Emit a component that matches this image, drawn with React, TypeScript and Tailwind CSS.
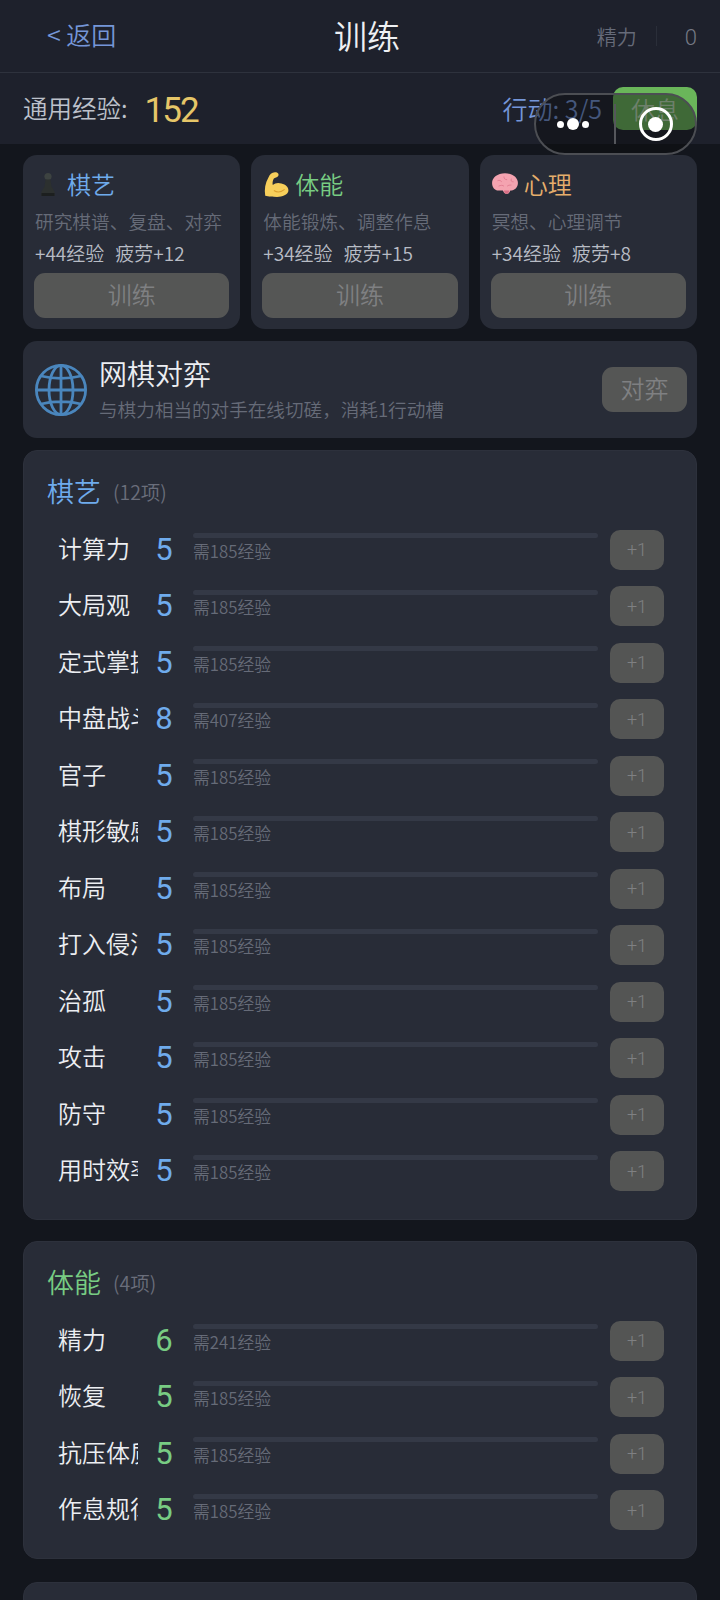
import React from 'react';

const font = { fontFamily: '"Noto Sans CJK SC", sans-serif' };

const PawnIcon = () => (
  <svg width="28" height="28" viewBox="0 0 28 28">
    <circle cx="14" cy="6.5" r="3.6" fill="#3d4341" />
    <path d="M11.5 9.5h5l1 7 3 5v4.500h-13v-4.500l3-5z" fill="#2c302f" />
    <path d="M7.500 23h13v3h-13z" fill="#1c1f1f" />
  </svg>
);

const MuscleIcon = () => (
  <svg width="28" height="28" viewBox="0 0 26 26">
    <path d="M3 24C2 18 3 12 6 7c1-3 3-5 6-5s4 2 3 3.500C14 7 12 7 11 8c-1 2-1.500 4-1 6 2-2 5-2.500 8-1.500 4 1 7 3.500 6.500 7C24 23 19 25 14 25c-4 0-8 0-11-1z" fill="#f7cf5b" />
    <path d="M11 19c3 2 7 1.500 10-1" stroke="#dca02f" strokeWidth="1" fill="none" />
  </svg>
);

const BrainIcon = () => (
  <svg width="28" height="26" viewBox="0 0 26 24">
    <path d="M1 11C1 6 6 2 13 2s12 4 12 9c0 4-3 7-7 7l-1 2c-.7 1.500-4 1.500-5 0l-1-2H7c-3.500 0-6-3-6-7z" fill="#f4a3b0" />
    <path d="M6 9c2-1 3 0 4 1M12 5c0 2 1 3 3 3M19 7c-1 2 0 3 2 3M7 14c2-1 4-1 5 0M15 14c1-1 3-1 4-1" stroke="#e27e93" strokeWidth="0.9" fill="none" />
    <path d="M12 18h5l-.5 2c-.5 1.500-3.500 1.500-4 0z" fill="#d86f86" />
  </svg>
);

const GlobeIcon = () => (
  <svg width="54" height="54" viewBox="0 0 54 54" fill="none" stroke="#4a86bd" strokeWidth="2.8">
    <circle cx="27" cy="27" r="24.6" />
    <ellipse cx="27" cy="27" rx="12" ry="24.6" />
    <path d="M27 2.400v49.200M2.400 27h49.200M7 13c12 3 28 3 40 0M7 41c12-3 28-3 40 0" />
  </svg>
);

const cards = [
  { icon: <PawnIcon />, title: '棋艺', color: 'text-[#6fabec]', desc: '研究棋谱、复盘、对弈', exp: '+44经验', tired: '疲劳+12' },
  { icon: <MuscleIcon />, title: '体能', color: 'text-[#78cc83]', desc: '体能锻炼、调整作息', exp: '+34经验', tired: '疲劳+15' },
  { icon: <BrainIcon />, title: '心理', color: 'text-[#e6ae6c]', desc: '冥想、心理调节', exp: '+34经验', tired: '疲劳+8' },
];

const skillRows = [
  ['计算力', 5, '需185经验'],
  ['大局观', 5, '需185经验'],
  ['定式掌握', 5, '需185经验'],
  ['中盘战斗', 8, '需407经验'],
  ['官子', 5, '需185经验'],
  ['棋形敏感', 5, '需185经验'],
  ['布局', 5, '需185经验'],
  ['打入侵消', 5, '需185经验'],
  ['治孤', 5, '需185经验'],
  ['攻击', 5, '需185经验'],
  ['防守', 5, '需185经验'],
  ['用时效率', 5, '需185经验'],
] as const;

const bodyRows = [
  ['精力', 6, '需241经验'],
  ['恢复', 5, '需185经验'],
  ['抗压体质', 5, '需185经验'],
  ['作息规律', 5, '需185经验'],
] as const;

const SkillRow = ({ name, level, need, color }: { name: string; level: number; need: string; color: string }) => (
  <div className="flex h-[56.5px] items-start">
    <div className="w-[80px] shrink-0 h-[40px] overflow-hidden whitespace-nowrap text-[24px] leading-[36px] text-[#eceef2] ml-[11px]">{name}</div>
    <div className={`w-[36px] shrink-0 ml-[8px] text-center text-[31px] leading-[40px] font-[Roboto] font-normal ${color}`}>{level}</div>
    <div className="w-[405px] shrink-0 ml-[11px] pt-[3.5px]">
      <div className="h-[5px] rounded-full bg-[#343946]" />
      <div className="text-[16.8px] leading-[24px] mt-[0.5px] text-[#666b78]">{need}</div>
    </div>
    <div className="w-[54px] shrink-0 h-[40px] ml-[12px] rounded-[10px] bg-[#545554] flex items-center justify-center text-[18px] text-[#7f8082] font-[Roboto] font-light">+1</div>
  </div>
);

const Section = ({ title, count, color, levelColor, rows, className }: { title: string; count: string; color: string; levelColor: string; rows: readonly (readonly [string, number, string])[]; className: string }) => (
  <div className={`rounded-[14px] bg-[#282c37] border border-[#2d313c] pl-[23px] pr-[32px] pt-[18px] ${className}`}>
    <div className="flex items-baseline h-[60.5px]">
      <span className={`text-[27px] leading-[44px] ${color}`}>{title}</span>
      <span className="text-[19.5px] ml-[12px] -translate-y-[2px] text-[#6a6e7b]">{count}</span>
    </div>
    {rows.map((r) => (
      <SkillRow key={r[0]} name={r[0]} level={r[1]} need={r[2]} color={levelColor} />
    ))}
  </div>
);

export default function App() {
  return (
    <div className="relative w-[720px] h-[1600px] overflow-hidden bg-[#13161d] font-[350]" style={font}>
      <div className="h-[73px] bg-[#1e212c] border-b border-[#2e323d] flex items-center px-[47px] relative">
        <span className="text-[25px] -mt-[2px] text-[#7596d8]">&lt; 返回</span>
        <span className="absolute left-0 right-0 pl-[14px] text-center text-[33px] text-[#eef0f3]">训练</span>
        <span className="ml-auto text-[20px] mt-[2px] text-[#666b79]">精力</span>
        <span className="ml-[19px] w-px h-[20px] bg-[#2a2e39]" />
        <span className="ml-[28px] -mr-[24px] mt-[3px] text-[22px] text-[#757985] font-[Roboto] font-light">0</span>
      </div>

      <div className="h-[71px] bg-[#1e212c] flex items-center px-[23px]">
        <span className="text-[24.5px] text-[#bdc1cb]">通用经验:</span>
        <span className="ml-[17px] mt-[5px] text-[35px] tracking-[-2px] text-[#e6c668] font-[Roboto] font-normal">152</span>
        <span className="ml-auto text-[25px] text-[#7596d8]">行动: 3/5</span>
        <div className="ml-[11px] w-[84px] h-[43px] rounded-[10px] bg-[#6ab65a] flex items-center justify-center text-[24px] text-[#bfe0b8]">休息</div>
      </div>

      <div className="px-[23px] pt-[11px]">
        <div className="grid grid-cols-3 gap-[11px]">
          {cards.map((c) => (
            <div key={c.title} className="h-[174px] rounded-[14px] bg-[#282c37] px-[11px] pt-[11px]">
              <div className="flex items-center h-[36px] gap-[5px]">
                {c.icon}
                <span className={`text-[24px] ${c.color}`}>{c.title}</span>
              </div>
              <div className="mt-[6px] pl-px text-[18.7px] leading-[26px] text-[#666b78] whitespace-nowrap">{c.desc}</div>
              <div className="mt-[6px] pl-px flex gap-[11px] text-[19px] leading-[26px] text-[#b8bcc5]">
                <span>{c.exp}</span>
                <span>{c.tired}</span>
              </div>
              <div className="mt-[7px] h-[45px] rounded-[11px] bg-[#555655] flex items-center justify-center pb-[3px] text-[24px] text-[#7f8082]">训练</div>
            </div>
          ))}
        </div>

        <div className="mt-[12px] h-[97px] rounded-[14px] bg-[#282c37] flex items-center pl-[11px] pr-[10px]">
          <GlobeIcon />
          <div className="ml-[11px] pb-[2px]">
            <div className="text-[28px] leading-[38px] text-[#eceef2]">网棋对弈</div>
            <div className="mt-[3px] text-[18.6px] leading-[28px] text-[#666b78]">与棋力相当的对手在线切磋，消耗1行动槽</div>
          </div>
          <div className="ml-auto w-[85px] h-[45px] rounded-[11px] bg-[#555655] flex items-center justify-center pb-[3px] text-[24px] text-[#7f8082]">对弈</div>
        </div>

        <Section className="mt-[12px] h-[770px]" title="棋艺" count="(12项)" color="text-[#6fabec]" levelColor="text-[#6fabec]" rows={skillRows} />
        <Section className="mt-[21px] h-[318px]" title="体能" count="(4项)" color="text-[#78cc83]" levelColor="text-[#78cc83]" rows={bodyRows} />
        <div className="mt-[23px] h-[60px] rounded-[14px] bg-[#282c37] border border-[#2d313c]" />
      </div>

      {/* 小程序胶囊 */}
      <div className="absolute left-[534px] top-[93px] w-[163px] h-[62px] rounded-full border-[2px] border-[#4c4e53] bg-[#0a0b0e]/45 flex items-center">
        <div className="w-[78px] pr-[4px] flex items-center justify-center gap-[3px]">
          <span className="w-[7px] h-[7px] rounded-full bg-white" />
          <span className="w-[12px] h-[12px] rounded-full bg-white" />
          <span className="w-[7px] h-[7px] rounded-full bg-white" />
        </div>
        <div className="w-[2px] h-[40px] bg-[#55575c]" />
        <div className="flex-1 flex items-center justify-center">
          <div className="w-[34px] h-[34px] rounded-full border-[3px] border-white flex items-center justify-center">
            <span className="w-[15px] h-[15px] rounded-full bg-white" />
          </div>
        </div>
      </div>
    </div>
  );
}
